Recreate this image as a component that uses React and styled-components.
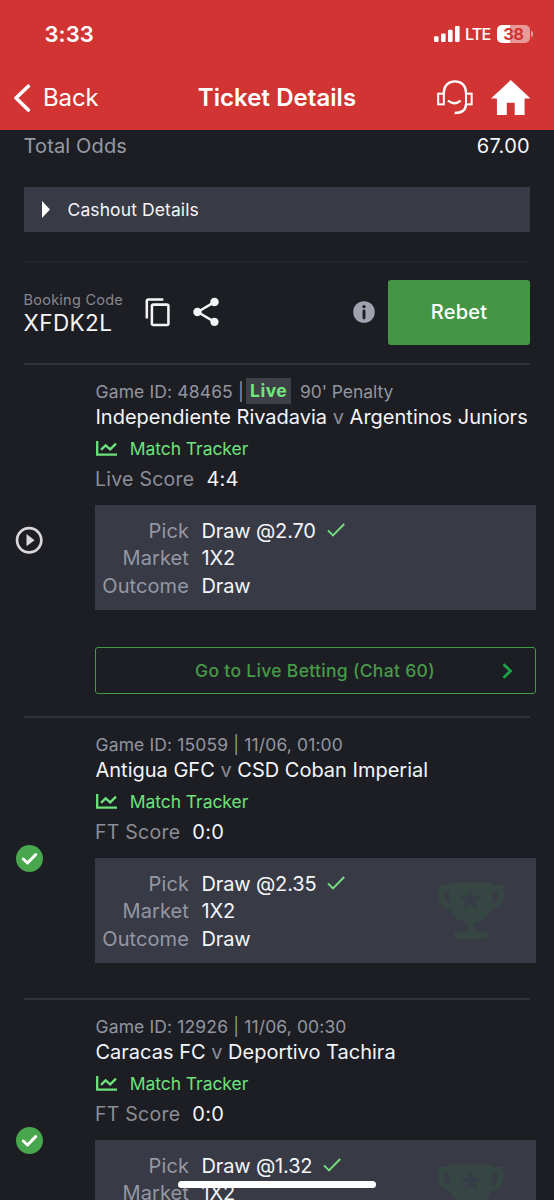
import React from "react";
import styled, { createGlobalStyle } from "styled-components";
import { MdContentCopy, MdShare, MdPlayCircleOutline } from "react-icons/md";

const GlobalStyle = createGlobalStyle`
    * {
        box-sizing:border-box;
    }

    body {
        margin:0;
        background:#1d1e23;
        font-family:Inter, "Liberation Sans", sans-serif;
    }

    svg {
        display:block;
        flex-shrink:0;
    }
`;

const Page = styled.div`
    position:relative;
    width:554px;
    height:1200px;
    overflow:hidden;
    background:#1d1e23;
    color:#f4f5f9;
    white-space:nowrap;
`;

const Header = styled.header`
    height:130px;
    background:#d13433;
    color:#fff;
`;

const StatusBar = styled.div`
    display:flex;
    align-items:center;
    justify-content:space-between;
    height:68px;
    padding:0 21px 0 44.5px;
`;

const Clock = styled.span`
    font-size:22px;
    font-weight:600;
    letter-spacing:0.1px;
`;

const StatusIcons = styled.div`
    display:flex;
    align-items:center;
`;

const Network = styled.span`
    width:37px;
    padding-left:5px;
    font-size:16.3px;
    font-weight:500;
    letter-spacing:-0.9px;
`;

const Battery = styled.div`
    display:flex;
    align-items:center;
    justify-content:center;
    width:32.5px;
    height:18px;
    border-radius:5px;
    background:linear-gradient(90deg, #fff 38%, #e89a99 38%);
    color:#d13433;
    font-size:16.5px;
    font-weight:700;
    letter-spacing:-0.6px;
`;

const BatteryTip = styled.span`
    width:2px;
    height:6px;
    margin-left:1.5px;
    border-radius:0 2px 2px 0;
    background:#e89a99;
`;

const NavBar = styled.div`
    display:grid;
    grid-template-columns:1fr auto 1fr;
    align-items:center;
    height:59px;
    padding:0 24px 0 13px;
`;

const Back = styled.div`
    display:flex;
    align-items:center;
    gap:12px;
    font-size:24px;
    letter-spacing:-0.1px;
`;

const Title = styled.h1`
    margin:0 0 0 11px;
    font-size:24px;
    font-weight:600;
    letter-spacing:0.05px;
`;

const NavIcons = styled.div`
    display:flex;
    align-items:center;
    justify-content:flex-end;
    gap:18px;
`;

const Content = styled.main`
    padding:0 24px 0 23.5px;
`;

const OddsRow = styled.div`
    display:flex;
    justify-content:space-between;
    height:57px;
    line-height:33px;
    font-size:20px;
`;

const OddsLabel = styled.span`
    letter-spacing:0.15px;
    color:#979aa5;
`;

const OddsValue = styled.span`
    letter-spacing:0.3px;
`;

const Cashout = styled.div`
    display:flex;
    align-items:center;
    gap:18px;
    height:45px;
    padding-left:18px;
    background:#383b45;
    font-size:17.5px;
    letter-spacing:0.1px;
`;

const Booking = styled.section`
    display:flex;
    align-items:center;
    height:102px;
    margin-top:29px;
    padding-bottom:2px;
    border-top:2px solid #24252b;
`;

const CodeLabel = styled.div`
    width:119px;
    padding-bottom:2px;
    line-height:22px;
    font-size:14.5px;
    letter-spacing:0.25px;
    color:#858893;
`;

const Code = styled.div`
    line-height:23px;
    font-size:22.5px;
    letter-spacing:0.4px;
    color:#f4f5f9;
`;

const Actions = styled.div`
    display:flex;
    align-items:center;
    gap:16px;
    flex:1;
    color:#f4f5f9;
`;

const InfoIcon = styled.svg`
    margin-right:13px;
`;

const Rebet = styled.button`
    width:142px;
    height:65px;
    padding:0;
    border:0;
    border-radius:3px;
    background:#449645;
    color:#fff;
    font-family:inherit;
    font-size:20px;
    font-weight:500;
    letter-spacing:0.24px;
`;

const Item = styled.article`
    display:flex;
    align-items:center;
    border-top:2px solid #30323a;
`;

const Status = styled.div`
    display:flex;
    justify-content:center;
    width:33px;
    margin-left:-10.5px;
    color:#d8d8da;
`;

const Details = styled.div`
    flex:1;
    margin:0 -6px 0 49px;
    padding:13px 0 ${(props) => (props.$live ? "22px" : "35px")};
`;

const GameLine = styled.div`
    display:flex;
    align-items:center;
    height:26px;
    padding-left:0.5px;
    font-size:17.5px;
    letter-spacing:0.13px;
    color:#9295a0;
`;

const LiveBadge = styled.span`
    width:44.5px;
    margin:0 9px 0 2.5px;
    line-height:26px;
    text-align:center;
    background:#3e4048;
    color:#72e57b;
    font-weight:700;
    letter-spacing:0.5px;
`;

const MatchClock = styled.span`
    letter-spacing:-0.05px;
`;

const Teams = styled.div`
    padding-left:0.5px;
    line-height:26px;
    font-size:20px;
`;

const Versus = styled.span`
    color:#8b8e99;
`;

const Tracker = styled.div`
    display:flex;
    align-items:center;
    gap:12.7px;
    height:37px;
    padding-left:1px;
    font-size:17.5px;
    letter-spacing:-0.05px;
    color:#6ee27c;
`;

const Score = styled.div`
    display:flex;
    gap:12px;
    line-height:25px;
    font-size:20px;
    letter-spacing:0.25px;
`;

const ScoreLabel = styled.span`
    font-size:19.5px;
    color:#8b8e99;
`;

const PickBox = styled.div`
    display:flex;
    justify-content:space-between;
    height:105px;
    margin-top:13px;
    padding:13px 32px 0 0;
    background:#383b45;
`;

const PickGrid = styled.dl`
    display:grid;
    grid-template-columns:94px auto;
    grid-auto-rows:27.3px;
    column-gap:12.5px;
    margin:0;
    line-height:27.3px;
    font-size:20px;
`;

const PickLabel = styled.dt`
    text-align:right;
    letter-spacing:0.1px;
    color:#9497a3;
`;

const PickValue = styled.dd`
    display:flex;
    align-items:center;
    gap:11px;
    margin:0;
    letter-spacing:-0.15px;
`;

const CheckIcon = styled.svg`
    margin-bottom:4px;
`;

const TrophyIcon = styled.svg`
    margin-top:11px;
`;

const LiveButton = styled.div`
    display:flex;
    align-items:center;
    height:47px;
    margin-top:37px;
    padding-right:22px;
    border:1.5px solid #419c46;
    border-radius:3px;
    color:#459b49;
    font-size:17.5px;
    font-weight:500;
    letter-spacing:0.31px;
`;

const LiveText = styled.span`
    flex:1;
    padding-left:32px;
    text-align:center;
`;

const HomeIndicator = styled.div`
    position:absolute;
    left:178px;
    bottom:12px;
    width:198px;
    height:7.5px;
    border-radius:4px;
    background:#fff;
`;

const games = [
    {
        id: "48465",
        live: true,
        clock: "90' Penalty",
        home: "Independiente Rivadavia",
        away: "Argentinos Juniors",
        scoreLabel: "Live Score",
        score: "4:4",
        odds: "2.70",
    },
    {
        id: "15059",
        date: "11/06, 01:00",
        home: "Antigua GFC",
        away: "CSD Coban Imperial",
        scoreLabel: "FT Score",
        score: "0:0",
        odds: "2.35",
    },
    {
        id: "12926",
        date: "11/06, 00:30",
        home: "Caracas FC",
        away: "Deportivo Tachira",
        scoreLabel: "FT Score",
        score: "0:0",
        odds: "1.32",
    },
];

const Signal = () => (
    <svg width="26" height="16" viewBox="0 0 26 16" fill="#fff">
        <rect x="0" y="10.2" width="4.6" height="5.8" rx="1.2" />
        <rect x="7" y="7.4" width="4.6" height="8.6" rx="1.2" />
        <rect x="14" y="3.8" width="4.6" height="12.2" rx="1.2" />
        <rect x="21" y="0" width="4.6" height="16" rx="1.2" />
    </svg>
);

const BackArrow = () => (
    <svg width="18" height="28" viewBox="0 0 18 28" fill="none" stroke="#fff" strokeWidth="3.6" strokeLinecap="round" strokeLinejoin="round">
        <path d="M15.3 2.2L3 14l12.3 12" />
    </svg>
);

const Headset = () => (
    <svg width="36" height="34.7" viewBox="0 0 108 104" fill="none" stroke="#fff" strokeWidth="7">
        <rect x="3.5" y="41" width="17" height="32" strokeWidth="6" />
        <rect x="87" y="41" width="17" height="32" strokeWidth="6" />
        <path d="M20.5 42V37C20.5 17 35 4 54 4S87 17 87 37V42" />
        <path d="M87 73C86 90 74 99 53 99" />
        <path d="M33 62Q53 77 71 62" />
    </svg>
);

const HomeIcon = () => (
    <svg width="39.5" height="35" viewBox="2 3 20 17" preserveAspectRatio="none" fill="#fff">
        <path d="M10 20v-6h4v6h5v-8h3L12 3 2 12h3v8z" />
    </svg>
);

const Info = () => (
    <InfoIcon width="22" height="22" viewBox="0 0 22 22">
        <circle cx="11" cy="11" r="10.8" fill="#a0a2ad" />
        <circle cx="11" cy="5.6" r="1.7" fill="#1d1e23" />
        <path d="M11 10v7" stroke="#1d1e23" strokeWidth="2.9" strokeLinecap="round" />
    </InfoIcon>
);

const Chart = () => (
    <svg width="21" height="15" viewBox="0 0 21 15" fill="none" stroke="#6ee27c" strokeWidth="2.3">
        <path d="M1.2 0v13.7H21" />
        <path d="M5 8.8L9.6 4.4l4.6 4L20 2.6" />
    </svg>
);

const Check = () => (
    <CheckIcon width="18" height="14" viewBox="0 0 18 14" fill="none" stroke="#74e07f" strokeWidth="1.9">
        <path d="M1 7.4l5 5L17.2 1" />
    </CheckIcon>
);

const Won = () => (
    <svg width="27" height="27" viewBox="0 0 27 27">
        <circle cx="13.5" cy="13.5" r="13.5" fill="#48a64c" />
        <path d="M7.3 14l4.2 4 8.2-8.4" fill="none" stroke="#fff" strokeWidth="3" strokeLinecap="round" strokeLinejoin="round" />
    </svg>
);

const Trophy = () => (
    <TrophyIcon width="66" height="57" viewBox="0 0 198 170">
        <path d="M36 17H10V42C10 61 24 72 46 73M160 17H188V42C188 61 174 72 152 73" fill="none" stroke="#364743" strokeWidth="17" />
        <path d="M34 2H163V60C163 92 140 117 109 122V148H148V168H49V148H88V122C57 117 34 92 34 60Z" fill="#364743" />
        <path d="M98 18l8 24h26l-21 15 8 25-21-15-21 15 8-25-21-15h26z" fill="#373d47" />
    </TrophyIcon>
);

const Chevron = () => (
    <svg width="11" height="16" viewBox="0 0 11 16" fill="none" stroke="#1ba548" strokeWidth="2.7">
        <path d="M1.5 1.2L8.6 8l-7.1 6.8" />
    </svg>
);

const Game = ({ game }) => {
    return (
        <Item>
            <Status>{game.live ? <MdPlayCircleOutline size={32.4} /> : <Won />}</Status>
            <Details $live={game.live}>
                <GameLine>
                    Game ID: {game.id} | {game.date}
                    {game.live && <LiveBadge>Live</LiveBadge>}
                    {game.live && <MatchClock>{game.clock}</MatchClock>}
                </GameLine>
                <Teams>
                    {game.home} <Versus>v</Versus> {game.away}
                </Teams>
                <Tracker>
                    <Chart />
                    Match Tracker
                </Tracker>
                <Score>
                    <ScoreLabel>{game.scoreLabel}</ScoreLabel>
                    {game.score}
                </Score>
                <PickBox>
                    <PickGrid>
                        <PickLabel>Pick</PickLabel>
                        <PickValue>Draw @{game.odds} <Check /></PickValue>
                        <PickLabel>Market</PickLabel>
                        <PickValue>1X2</PickValue>
                        <PickLabel>Outcome</PickLabel>
                        <PickValue>Draw</PickValue>
                    </PickGrid>
                    {!game.live && <Trophy />}
                </PickBox>
                {game.live && (
                    <LiveButton>
                        <LiveText>Go to Live Betting (Chat 60)</LiveText>
                        <Chevron />
                    </LiveButton>
                )}
            </Details>
        </Item>
    );
};

const App = () => {
    return (
        <Page>
            <GlobalStyle />
            <Header>
                <StatusBar>
                    <Clock>3:33</Clock>
                    <StatusIcons>
                        <Signal />
                        <Network>LTE</Network>
                        <Battery>38</Battery>
                        <BatteryTip />
                    </StatusIcons>
                </StatusBar>
                <NavBar>
                    <Back><BackArrow />Back</Back>
                    <Title>Ticket Details</Title>
                    <NavIcons>
                        <Headset />
                        <HomeIcon />
                    </NavIcons>
                </NavBar>
            </Header>
            <Content>
                <OddsRow>
                    <OddsLabel>Total Odds</OddsLabel>
                    <OddsValue>67.00</OddsValue>
                </OddsRow>
                <Cashout>
                    <svg width="8" height="17" viewBox="0 0 8 17" fill="#fff">
                        <path d="M0 0l8 8.5L0 17z" />
                    </svg>
                    Cashout Details
                </Cashout>
                <Booking>
                    <CodeLabel>
                        Booking Code
                        <Code>XFDK2L</Code>
                    </CodeLabel>
                    <Actions>
                        <MdContentCopy size={30.5} />
                        <MdShare size={34} />
                    </Actions>
                    <Info />
                    <Rebet>Rebet</Rebet>
                </Booking>
                {games.map((game) => (
                    <Game key={game.id} game={game} />
                ))}
            </Content>
            <HomeIndicator />
        </Page>
    );
};

export default App;
